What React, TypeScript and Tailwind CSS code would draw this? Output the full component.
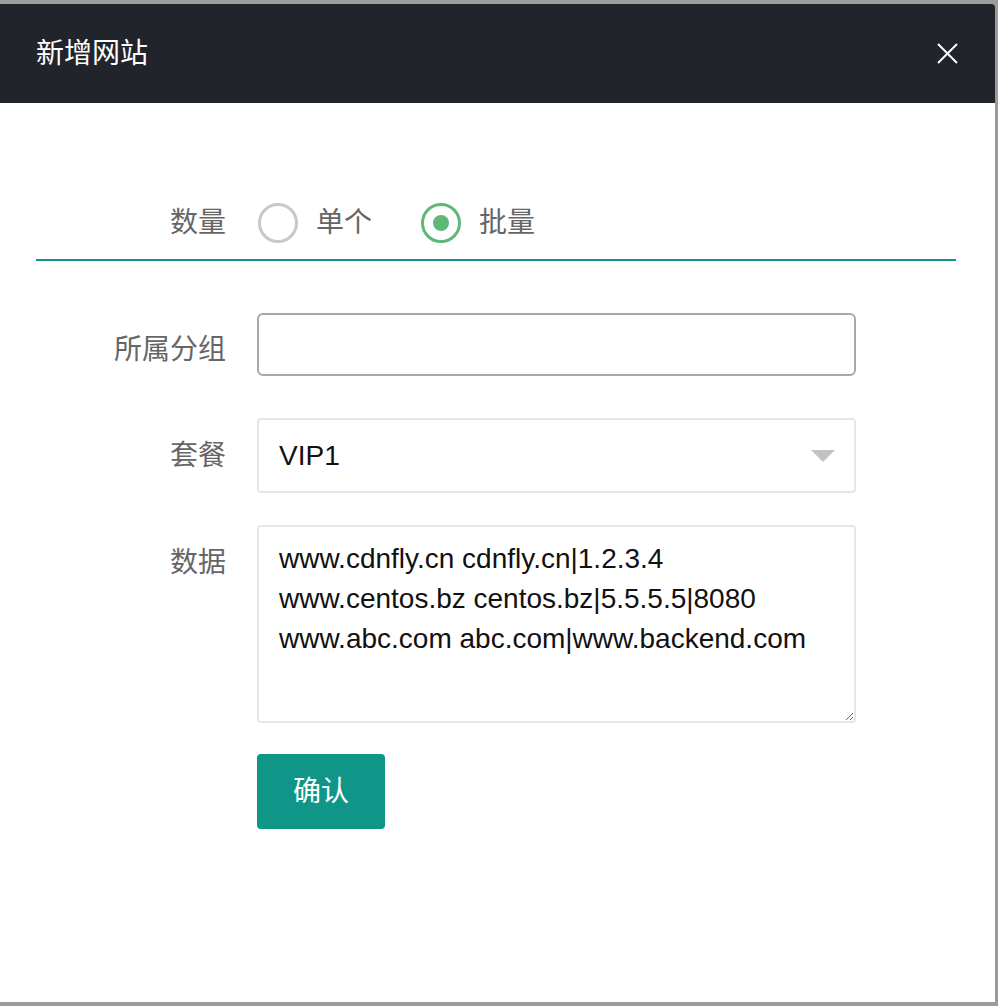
import React, { useState } from 'react';

const FONT = "font-['Liberation_Sans','Noto_Sans_CJK_SC',sans-serif]";

const SAMPLE = `www.cdnfly.cn cdnfly.cn|1.2.3.4
www.centos.bz centos.bz|5.5.5.5|8080
www.abc.com abc.com|www.backend.com`;

function Radio({ checked, label, onClick }: { checked: boolean; label: string; onClick: () => void }) {
  return (
    <button type="button" onClick={onClick} className="flex items-center">
      <span
        className={`flex h-[40px] w-[40px] items-center justify-center rounded-full border-[3px] ${
          checked ? 'border-[#5fb878]' : 'border-[#c8c8c8]'
        }`}
      >
        {checked && <span className="h-[16px] w-[16px] rounded-full bg-[#5fb878]" />}
      </span>
      <span className="ml-[18px] text-[28px] leading-[40px] text-[#666]">{label}</span>
    </button>
  );
}

function Row({ label, pt, children }: { label: string; pt: string; children: React.ReactNode }) {
  return (
    <div className="flex items-start">
      <div className={`w-[190px] shrink-0 text-right text-[28px] leading-[40px] text-[#666] ${pt}`}>{label}</div>
      <div className="ml-[31px] w-[599px]">{children}</div>
    </div>
  );
}

export default function App() {
  const [batch, setBatch] = useState(true);

  return (
    <div className={`h-screen bg-[#9c9c9c] pt-[4px] pr-[3px] pb-[4px] ${FONT}`}>
      <div className="flex h-full flex-col overflow-hidden rounded-tr-[3px] bg-white">
        {/* Title bar */}
        <div className="flex h-[99px] shrink-0 items-center justify-between bg-[#21242b] pl-[36px] pr-[37px]">
          <span className="text-[28px] text-white">新增网站</span>
          <button type="button" className="text-white">
            <svg width="21" height="21" viewBox="0 0 21 21" fill="none" stroke="currentColor" strokeWidth="2">
              <line x1="1" y1="1" x2="20" y2="20" />
              <line x1="20" y1="1" x2="1" y2="20" />
            </svg>
          </button>
        </div>

        <div className="pl-[36px] pr-[39px]">
          {/* Quantity */}
          <div className="mt-[100px] border-b-2 border-[#109688] pb-[16px]">
            <div className="flex items-center">
              <div className="w-[190px] shrink-0 text-right text-[28px] leading-[40px] text-[#666]">数量</div>
              <div className="ml-[32px] flex items-center gap-[49px]">
                <Radio checked={!batch} label="单个" onClick={() => setBatch(false)} />
                <Radio checked={batch} label="批量" onClick={() => setBatch(true)} />
              </div>
            </div>
          </div>

          <div className="mt-[52px]">
            <Row label="所属分组" pt="pt-[17px]">
              <input
                type="text"
                className="h-[63px] w-full rounded-[6px] border-2 border-[#a8a8a8] px-[20px] text-[28px] outline-none"
              />
            </Row>
          </div>

          <div className="mt-[42px]">
            <Row label="套餐" pt="pt-[18px]">
              <div className="flex h-[75px] w-full items-center justify-between rounded-[4px] border-2 border-[#e6e6e6] pl-[20px] pr-[19px]">
                <span className="text-[28px] text-[#111]">VIP1</span>
                <svg width="24" height="12" viewBox="0 0 24 12">
                  <polygon points="0,0 24,0 12,12" fill="#c2c2c2" />
                </svg>
              </div>
            </Row>
          </div>

          <div className="mt-[32px]">
            <Row label="数据" pt="pt-[18px]">
              <textarea
                defaultValue={SAMPLE}
                className="block h-[198px] w-full rounded-[4px] border-2 border-[#e6e6e6] px-[20px] pt-[12px] text-[28px] leading-[40px] text-[#111] outline-none"
              />
            </Row>
          </div>

          <div className="mt-[31px] pl-[221px]">
            <button
              type="button"
              className="h-[75px] w-[128px] rounded-[4px] bg-[#109688] text-[28px] text-white"
            >
              确认
            </button>
          </div>
        </div>
      </div>
    </div>
  );
}
